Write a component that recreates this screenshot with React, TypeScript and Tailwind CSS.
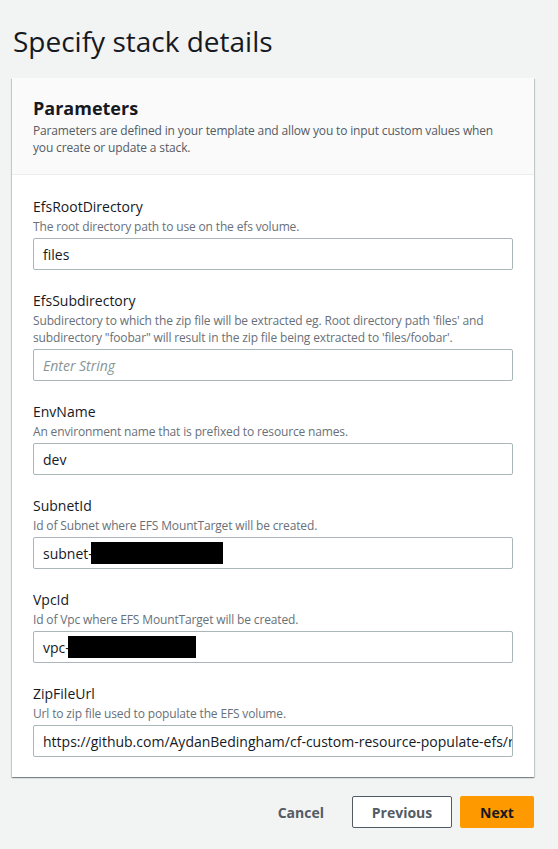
import React from "react";

const font = { fontFamily: '"Open Sans", "Liberation Sans", sans-serif' };

function Field({
  label,
  desc,
  children,
}: {
  label: string;
  desc: React.ReactNode;
  children: React.ReactNode;
}) {
  return (
    <div className="flex flex-col">
      <div className="text-[14px] leading-[22px] text-[#16191f]">{label}</div>
      <div className="text-[12px] leading-[17px] tracking-[-0.15px] text-[#687078] mb-[3px]">{desc}</div>
      {children}
    </div>
  );
}

function Input({ value, placeholder, mask }: { value?: string; placeholder?: string; mask?: number }) {
  return (
    <div className="h-[32px] border border-[#aab7b8] rounded-[2px] bg-white flex items-center px-[9px] text-[14px] text-[#16191f] overflow-hidden whitespace-nowrap">
      {value ? (
        <span>{value}</span>
      ) : (
        <span className="italic text-[#879596]">{placeholder}</span>
      )}
      {mask ? <span className="inline-block h-[22px] bg-black ml-[-2px]" style={{ width: mask }} /> : null}
    </div>
  );
}

export default function App() {
  return (
    <div className="min-h-[849px] bg-[#f2f3f3] px-[12px] pt-[24px]" style={font}>
      <h1 className="text-[28px] leading-[34px] text-[#16191f] pl-[1px] mb-[20px]">Specify stack details</h1>
      <div className="w-[522px] bg-white shadow-[0_1px_1px_0_rgba(0,28,36,0.3),1px_1px_1px_0_rgba(0,28,36,0.15),-1px_1px_1px_0_rgba(0,28,36,0.15)]">
        <div className="bg-[#fafafa] border-b border-[#eaeded] px-[21px] pt-[18px] pb-[18px]">
          <h2 className="text-[18px] leading-[24px] font-bold text-[#16191f]">Parameters</h2>
          <p className="text-[12px] leading-[17px] tracking-[-0.15px] text-[#545b64] mt-[2px]">
            Parameters are defined in your template and allow you to input custom values when you create or update a stack.
          </p>
        </div>
        <div className="px-[21px] pt-[21px] pb-[20px] flex flex-col gap-[20px]">
          <Field label="EfsRootDirectory" desc="The root directory path to use on the efs volume.">
            <Input value="files" />
          </Field>
          <Field
            label="EfsSubdirectory"
            desc={`Subdirectory to which the zip file will be extracted eg. Root directory path 'files' and subdirectory "foobar" will result in the zip file being extracted to 'files/foobar'.`}
          >
            <Input placeholder="Enter String" />
          </Field>
          <Field label="EnvName" desc="An environment name that is prefixed to resource names.">
            <Input value="dev" />
          </Field>
          <Field label="SubnetId" desc="Id of Subnet where EFS MountTarget will be created.">
            <Input value="subnet-" mask={132} />
          </Field>
          <Field label="VpcId" desc="Id of Vpc where EFS MountTarget will be created.">
            <Input value="vpc-" mask={128} />
          </Field>
          <Field label="ZipFileUrl" desc="Url to zip file used to populate the EFS volume.">
            <Input value="https://github.com/AydanBedingham/cf-custom-resource-populate-efs/raw/master/files.zip" />
          </Field>
        </div>
      </div>
      <div className="w-[522px] flex justify-end items-center gap-[8px] mt-[19px]">
        <button className="h-[32px] px-[20px] text-[14px] font-bold text-[#545b64]">Cancel</button>
        <button className="h-[32px] w-[100px] border border-[#545b64] rounded-[2px] bg-white text-[14px] font-bold text-[#545b64]">Previous</button>
        <button className="h-[32px] w-[74px] rounded-[2px] bg-[#ff9900] text-[14px] font-bold text-[#16191f]">Next</button>
      </div>
    </div>
  );
}
